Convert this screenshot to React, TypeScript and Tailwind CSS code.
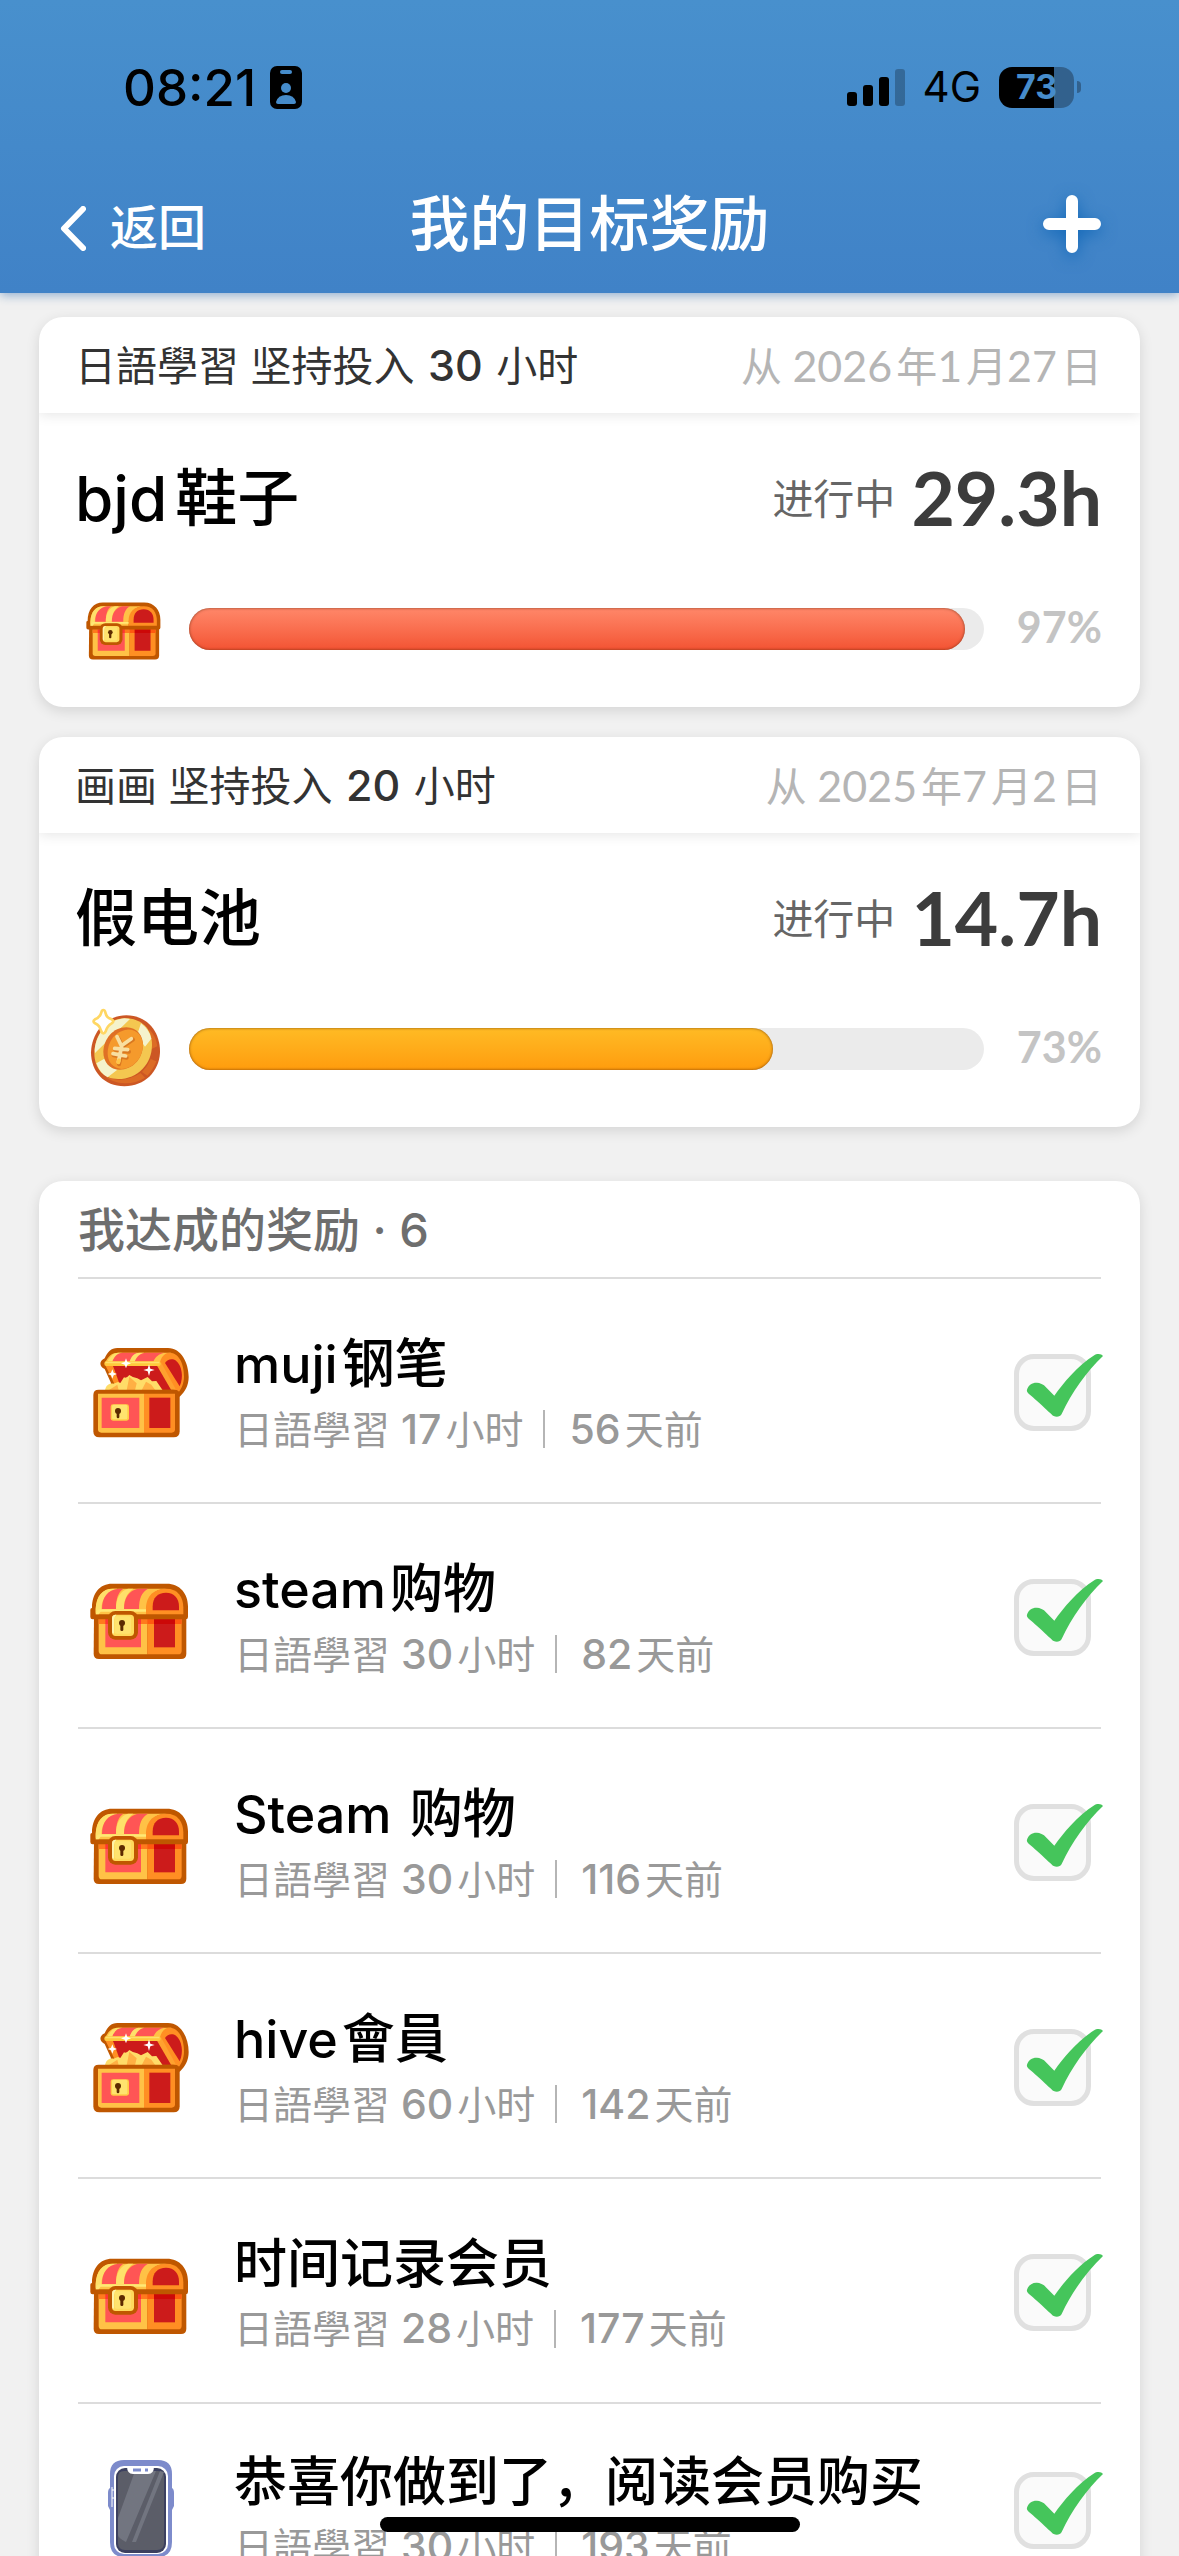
type IconKind = "chest" | "openChest" | "coin" | "phone";

const sans = "font-['Inter','Noto_Sans_CJK_SC',sans-serif]";
const numeric = "font-['Lato','Noto_Sans_CJK_SC',sans-serif]";

const goals = [
  { topic: "日語學習", target: 30, since: "从 2026年1月27日", title: "bjd鞋子", hours: 29.3, percent: 97, icon: "chest" as IconKind, fill: "from-[#ff8769] to-[#f35332]" },
  { topic: "画画", target: 20, since: "从 2025年7月2日", title: "假电池", hours: 14.7, percent: 73, icon: "coin" as IconKind, fill: "from-[#ffbb24] to-[#ff9c0c]" },
];

const rewards: { title: string; spent: string; ago: string; icon: IconKind }[] = [
  { title: "muji钢笔", spent: "日語學習 17小时", ago: "56天前", icon: "openChest" },
  { title: "steam购物", spent: "日語學習 30小时", ago: "82天前", icon: "chest" },
  { title: "Steam 购物", spent: "日語學習 30小时", ago: "116天前", icon: "chest" },
  { title: "hive會員", spent: "日語學習 60小时", ago: "142天前", icon: "openChest" },
  { title: "时间记录会员", spent: "日語學習 28小时", ago: "177天前", icon: "chest" },
  { title: "恭喜你做到了，阅读会员购买", spent: "日語學習 30小时", ago: "193天前", icon: "phone" },
];

/** Sets Latin runs in their own style, with a class for the space that separates them from Chinese text. */
function Mixed({ text, latin }: { text: string; latin: string }) {
  return (
    <>
      {text.split(/([A-Za-z0-9.]+)/).map((run, index) =>
        index % 2 === 1 ? (
          <span key={index} className={latin}>
            {run}
          </span>
        ) : (
          run
        ),
      )}
    </>
  );
}

function ChestIcon({ className }: { className: string }) {
  return (
    <svg viewBox="24 -7 372 360" className={className} aria-hidden="true">
      <path d="M72 170H349V280Q349 296 333 296H87Q71 296 71 280Z" fill="#bf5700" />
      <path d="M86 176H232V282H96Q86 282 86 271Z" fill="#ffc246" />
      <path d="M232 176H335V271Q335 282 324 282H232Z" fill="#ff8f23" />
      <path d="M106 176H213V261H106Z" fill="#ff5555" />
      <path d="M252 176H315V261H252Z" fill="#cc1b1b" />
      <path d="M86 176H232V191H86Z" fill="#ff7a1d" />
      <path d="M106 176H213V191H106Z" fill="#ff3434" />
      <path d="M232 176H335V191H232Z" fill="#ff5a10" />
      <path d="M252 176H315V191H252Z" fill="#cc0808" />
      <path d="M66 143C66 98 90 70 126 70H290C330 70 354 100 354 138V170Q354 177 347 177H68Q61 177 61 170V148Q61 143 66 143Z" fill="#bf5700" />
      <path d="M77 162V146C79 106 98 85 128 85H290C252 86 229 108 228 162Z" fill="#ffc246" />
      <path d="M77 158V146C79 106 98 85 128 85H142C112 92 94 115 94 148Z" fill="#ffe06a" />
      <path d="M96 146C96 110 113 89 145 85H160C144 96 138 116 138 146Z" fill="#ff5555" />
      <path d="M138 146C138 112 151 92 174 85H190C170 99 162 116 162 146Z" fill="#ffe06a" />
      <path d="M162 146C162 112 178 90 203 85H234C215 95 207 115 207 146Z" fill="#ff5555" />
      <path d="M228 162V144C228 106 252 85 289 85C323 85 340 109 340 142V162Z" fill="#ff8f23" />
      <path d="M248 150V139C248 112 263 97 288 97C313 97 327 114 327 139V150Z" fill="#cc1b1b" />
      <path d="M77 162L80 152Q82 147 90 147H228V154H92L86 162Z" fill="#ffe875" />
      <rect x="114" y="152" width="90" height="86" rx="22" fill="#bf5700" />
      <rect x="126" y="163" width="66" height="64" rx="11" fill="#ffda5c" />
      <rect x="134" y="168" width="49" height="52" rx="6" fill="#ffe36e" />
      <path d="M126 174Q126 163 137 163H139Q132 170 132 178V220Q126 220 126 215Z" fill="#fff2a8" />
      <circle cx="156" cy="188" r="9" fill="#5d2b00" />
      <rect x="151" y="190" width="9" height="22" rx="4" fill="#5d2b00" />
    </svg>
  );
}

function OpenChestIcon({ className }: { className: string }) {
  return (
    <svg viewBox="24 8 372 360" className={className} aria-hidden="true">
      <path d="M104 84C113 64 123 53 142 53H294C334 53 356 98 356 140C356 165 345 185 329 199L300 190H128L122 156L104 116C88 109 86 92 104 84Z" fill="#bf5700" />
      <path d="M106 96C116 76 126 67 145 67H305C284 72 274 84 270 108L108 106Z" fill="#ffc246" />
      <path d="M126 94C134 76 143 67 158 67H203C192 72 184 82 179 94Z" fill="#ff5555" />
      <path d="M126 94C134 76 143 67 158 67H145C130 68 120 78 112 94Z" fill="#ffe06a" />
      <path d="M179 94C184 78 192 67 209 67H222C208 75 201 83 197 94Z" fill="#ffe06a" />
      <path d="M194 94C201 78 211 67 228 67H284C266 70 256 80 250 94Z" fill="#ff5555" />
      <path d="M106 105H129L164 178H140L132 158Z" fill="#ff8f23" />
      <path d="M129 106H262L305 178H155Z" fill="#cc1b1b" />
      <path d="M270 95C276 75 287 67 298 67C330 67 342 106 342 138C342 160 334 176 327 184L311 178L265 108Z" fill="#ff8f23" />
      <path d="M262 108L273 96L318 178H303Z" fill="#ffa12f" />
      <path d="M285 98C292 86 307 83 318 91C335 104 342 140 329 168Z" fill="#cc1b1b" />
      <rect x="103" y="93" width="169" height="14" rx="6" fill="#ffc83c" />
      <path d="M106 94H268V99H106Z" fill="#ffe06a" />
      <path d="M105 180C108 164 118 158 130 160L144 155L151 158L162 141Q168 146 178 134Q191 143 202 144L213 150L233 140L246 153L259 152L278 180Z" fill="#ffdc68" />
      <path d="M170 180L178 139L200 159L195 180ZM215 180L228 154L244 163L256 180ZM116 180L142 163L146 180Z" fill="#ffb044" />
      <path d="M70 194Q70 178 86 178H313Q329 178 329 194V303Q329 321 311 321H88Q70 321 70 303Z" fill="#bf5700" />
      <path d="M84 190H222V307H94Q84 307 84 297Z" fill="#ffc246" />
      <path d="M222 190H315V297Q315 307 305 307H222Z" fill="#ff8f23" />
      <path d="M95 202H208V293H95Z" fill="#ff5555" />
      <path d="M238 202H301V293H238Z" fill="#cc1b1b" />
      <rect x="122" y="222" width="55" height="49" rx="7" fill="#ffcb45" />
      <rect x="126" y="223" width="46" height="44" rx="5" fill="#ffe36e" />
      <circle cx="144" cy="242" r="9" fill="#5d2b00" />
      <rect x="140" y="244" width="8" height="20" rx="4" fill="#5d2b00" />
      <path d="M168 84L172 95L183 99L172 103L168 114L164 103L153 99L164 95ZM237 102L241 115L254 119L241 123L237 137L233 123L220 119L233 115ZM127 117L131 127L141 131L131 135L127 145L123 135L113 131L123 127Z" fill="#fff" />
    </svg>
  );
}

function CoinIcon({ className }: { className: string }) {
  return (
    <svg viewBox="24 40 282 273" className={className} aria-hidden="true">
      <path d="M172 77C235 77 274 126 273 188C271 245 227 290 166 290C105 290 66 246 66 188C68 128 111 77 172 77Z" fill="#cc5724" />
      <path d="M240 118Q262 140 265 170L248 178ZM262 215L245 208Q236 230 219 247L235 258Q252 241 262 215ZM215 250L228 264Q200 282 166 281Q130 280 108 260Q160 284 215 250Z" fill="#dc6c25" />
      <path d="M168 86C218 86 249 118 249 165C249 222 207 268 147 268C103 268 76 235 76 190C78 132 116 86 168 86Z" fill="#f4c750" />
      <path d="M77 181C82 130 116 91 166 86L183 88L78 190ZM216 101Q242 121 247 147L228 171L204 137ZM82 221L106 207Q119 234 145 240L116 263Q93 252 82 221Z" fill="#f5f3cc" />
      <path d="M172 113C204 113 223 138 222 169C219 209 191 240 151 240C121 240 103 216 103 187C104 148 132 113 172 113Z" fill="#df7025" />
      <path d="M174 120C203 118 222 139 222 169C219 207 192 237 157 238C131 235 116 217 116 191C116 155 139 124 174 120Z" fill="#f59a2c" />
      <path d="M148 146L161 171L192 150M163 173L150 224M139 180L180 186M134 197L173 204" fill="none" stroke="#d97820" strokeWidth="12" strokeLinecap="round" />
      <path d="M144 141L157 168L187 147M158 170L148 217M137 176L176 180M132 192L170 199" fill="none" stroke="#f8dea0" strokeWidth="11" strokeLinecap="round" />
      <path d="M150 212L148 218" stroke="#ffc548" strokeWidth="11" strokeLinecap="round" />
      <path d="M103 61Q107 61 109 68C112 81 116 84 128 89Q138 95 128 101C117 107 114 112 110 125Q103 138 97 125C92 110 89 106 78 101Q69 95 78 89C90 84 94 80 97 68Q99 61 103 61Z" fill="#fff" stroke="#ffd763" strokeWidth="8" />
    </svg>
  );
}

function PhoneIcon({ className }: { className: string }) {
  return (
    <svg viewBox="0 0 124 120" className={className} aria-hidden="true">
      <path d="M32 38V24Q32 10 46 10H80Q94 10 94 24V38Q96 39 96 43V56L94 60V92Q94 107 80 107H46Q32 107 32 92V60L30 56V43Q30 39 32 38Z" fill="#7d8bcb" />
      <rect x="36" y="16" width="54" height="88" rx="10" fill="#fff" />
      <rect x="38" y="18" width="50" height="85" rx="9" fill="#3c405f" />
      <path d="M46 21H80Q86 21 86 27V93Q86 100 79 100H47Q40 100 40 93V27Q40 21 46 21Z" fill="#5b5d68" />
      <path d="M57 21H78L48 92Q40 88 40 85V68ZM86 22L58 92H54L82 21Z" fill="#727580" />
      <path d="M49 16H76Q76 24 70 24H55Q49 24 49 16Z" fill="#fff" />
      <path d="M55 20H63M67 20H70" stroke="#7d8bcb" strokeWidth="3" />
      <path d="M34 37V57M34 40H36M34 48H36" stroke="#fff" strokeWidth="1" />
    </svg>
  );
}

function RewardIcon({ kind, className }: { kind: IconKind; className: string }) {
  if (kind === "chest") return <ChestIcon className={className} />;
  if (kind === "openChest") return <OpenChestIcon className={className} />;
  if (kind === "coin") return <CoinIcon className={className} />;
  return <PhoneIcon className={className} />;
}

function StatusBar() {
  return (
    <div className="flex h-[174px] items-center justify-between pr-[98px] pl-[123px] text-black">
      <div className="flex items-center gap-3.5">
        <span className="text-[51px] leading-none font-medium">08:21</span>
        <svg viewBox="0 0 32 43" className="h-[43px] w-8" aria-hidden="true">
          <rect width="32" height="43" rx="7" />
          <rect x="10" y="4" width="12" height="4" rx="2" fill="#468ccb" />
          <circle cx="16" cy="22" r="5" fill="#468ccb" />
          <path d="M6 36Q8 29 16 29T26 36Q26 38 24 38H8Q6 38 6 36Z" fill="#468ccb" />
        </svg>
      </div>
      <div className="flex items-center gap-[18px]">
        <svg viewBox="0 0 58 37" className="h-[37px] w-[58px]" aria-hidden="true">
          <rect y="23" width="10" height="14" rx="3" />
          <rect x="16" y="16" width="10" height="21" rx="3" />
          <rect x="32" y="8" width="10" height="29" rx="3" />
          <rect x="48" width="10" height="37" rx="3" opacity="0.25" />
        </svg>
        <span className="text-[42px] leading-none">4G</span>
        <div className="flex items-center gap-[3px]">
          <div className="flex h-[41px] w-[75px] items-center justify-center rounded-[13px] bg-[linear-gradient(90deg,#000_73%,#32618d_73%)] text-[34px] leading-none font-bold text-[#468ccb]">73</div>
          <div className="h-3 w-1 rounded-r-full bg-[#32618d]" />
        </div>
      </div>
    </div>
  );
}

function GoalCard({ goal }: { goal: (typeof goals)[number] }) {
  return (
    <section className="overflow-hidden rounded-[24px] bg-white shadow-[0_4px_14px_rgba(0,0,0,0.12)]">
      <div className="flex h-24 items-center justify-between pr-[38px] pl-9 shadow-[0_2px_12px_rgba(0,0,0,0.1)]">
        <p className="text-[41px] leading-none text-[#333]">
          {goal.topic} 坚持投入 <span className="mx-0.5 text-[43px] font-medium">{goal.target}</span> 小时
        </p>
        <p className={`${numeric} text-[41px] leading-none text-[#b5b5b5]`}>
          <Mixed text={goal.since} latin="mr-1 text-[43px]" />
        </p>
      </div>
      <div className="pt-9 pr-[38px] pb-[33px] pl-9">
        <div className="flex h-[100px] items-center justify-between">
          <h2 className="text-[62px] leading-none font-medium">
            <Mixed text={goal.title} latin="mr-2" />
          </h2>
          <p className="flex items-center gap-4 leading-none">
            <span className="text-[41px] text-[#666]">进行中</span>
            <span className={`${numeric} pb-1 text-[75px] font-bold text-[#3c3c3c]`}>{goal.hours}h</span>
          </p>
        </div>
        <div className="mt-[34px] flex h-[91px] items-center">
          <div className="mr-4 flex w-[98px] shrink-0 justify-center">
            <RewardIcon kind={goal.icon} className="h-[91px] w-[94px]" />
          </div>
          <div className="h-[42px] flex-1 rounded-full bg-[#ebebeb]" role="progressbar" aria-label={goal.title} aria-valuenow={goal.percent} aria-valuemin={0} aria-valuemax={100}>
            <div className={`h-full rounded-full bg-linear-to-b shadow-[inset_0_0_3px_rgba(80,30,0,0.7)] ${goal.fill}`} style={{ width: `${(goal.hours / goal.target) * 100}%` }} />
          </div>
          <span className={`${numeric} w-[118px] shrink-0 pb-1 text-right text-[43px] leading-none font-bold text-[#c4c4c4]`}>{goal.percent}%</span>
        </div>
      </div>
    </section>
  );
}

function RewardRow({ reward }: { reward: (typeof rewards)[number] }) {
  return (
    <li className="flex h-[225px] items-center gap-8 border-b-2 border-[#dcdcdc] pt-1 last:h-[208px] last:border-b-0">
      <RewardIcon kind={reward.icon} className="h-[120px] w-[124px] shrink-0" />
      <div className="min-w-0 flex-1">
        <h3 className="text-[53px] leading-[72px] font-medium whitespace-nowrap">
          <Mixed text={reward.title} latin="mr-1 text-[52px]" />
        </h3>
        <p className="flex items-center text-[39px] leading-[56px] text-[#999]">
          <span>
            <Mixed text={reward.spent} latin="mr-1 text-[41px] font-medium" />
          </span>
          <span className="mr-6 ml-5 h-[38px] w-0.5 bg-[#b5b5b5]" />
          <span>
            <Mixed text={reward.ago} latin="mr-1 text-[41px] font-medium" />
          </span>
        </p>
      </div>
      <label className="relative mr-2.5 block size-[77px] shrink-0">
        <input type="checkbox" defaultChecked aria-label={reward.title} className="peer block size-full appearance-none rounded-[20px] border-5 border-[#e0e0e0] bg-[#fafafa]" />
        <svg viewBox="342 165 270 231" className="pointer-events-none absolute top-0 left-0 hidden h-[77px] w-[90px] max-w-none peer-checked:block" aria-hidden="true">
          <path d="M381 272C385 258 398 250 411 251C420 252 427 255 432 259L463 290C490 252 530 202 585 167C592 163 605 165 609 171C560 218 515 280 485 345C481 353 470 356 461 351C455 347 420 312 386 284C381 280 380 276 381 272Z" fill="#45c55b" />
        </svg>
      </label>
    </li>
  );
}

export default function App() {
  return (
    <div className={`${sans} relative flex h-screen flex-col overflow-hidden bg-[#f1f1f1] text-black`}>
      <header className="z-10 shrink-0 bg-linear-to-b from-[#4890cd] to-[#4082c7] pb-[19px] shadow-[0_2px_10px_rgba(40,100,170,0.5)]">
        <StatusBar />
        <nav className="grid h-[100px] grid-cols-[1fr_auto_1fr] items-center px-[60px] text-white">
          <button type="button" className="flex items-center gap-6 justify-self-start pt-2 text-[48px] leading-none font-medium">
            <svg viewBox="0 0 26 45" className="h-[45px] w-[26px]" aria-hidden="true">
              <path d="M23 3L4 22.5L23 42" fill="none" stroke="#fff" strokeWidth="6" strokeLinecap="round" strokeLinejoin="round" />
            </svg>
            <span>返回</span>
          </button>
          <h1 className="text-[60px] leading-none font-medium">我的目标奖励</h1>
          <button type="button" aria-label="添加" className="mr-2.5 justify-self-end">
            <svg viewBox="0 0 74 74" className="size-[74px] drop-shadow-[0_4px_8px_#1469b8]" aria-hidden="true">
              <path d="M37 14V60M14 37H60" stroke="#fff" strokeWidth="12" strokeLinecap="round" />
            </svg>
          </button>
        </nav>
      </header>
      <main className="min-h-0 flex-1 overflow-y-auto px-[39px] pt-6 [scrollbar-width:none]">
        <div className="flex flex-col gap-[30px]">
          {goals.map((goal) => (
            <GoalCard key={goal.title} goal={goal} />
          ))}
        </div>
        <section className="mt-[54px] rounded-[24px] bg-white px-[39px] shadow-[0_4px_14px_rgba(0,0,0,0.12)]">
          <h2 className="flex h-[98px] items-center border-b-2 border-[#dcdcdc] text-[47px] leading-none font-medium text-[#6e6e6e]">我达成的奖励 · 6</h2>
          <ul>
            {rewards.map((reward) => (
              <RewardRow key={reward.title} reward={reward} />
            ))}
          </ul>
        </section>
      </main>
      <div className="absolute bottom-6 left-1/2 h-[15px] w-[420px] -translate-x-1/2 rounded-full bg-black" />
    </div>
  );
}
